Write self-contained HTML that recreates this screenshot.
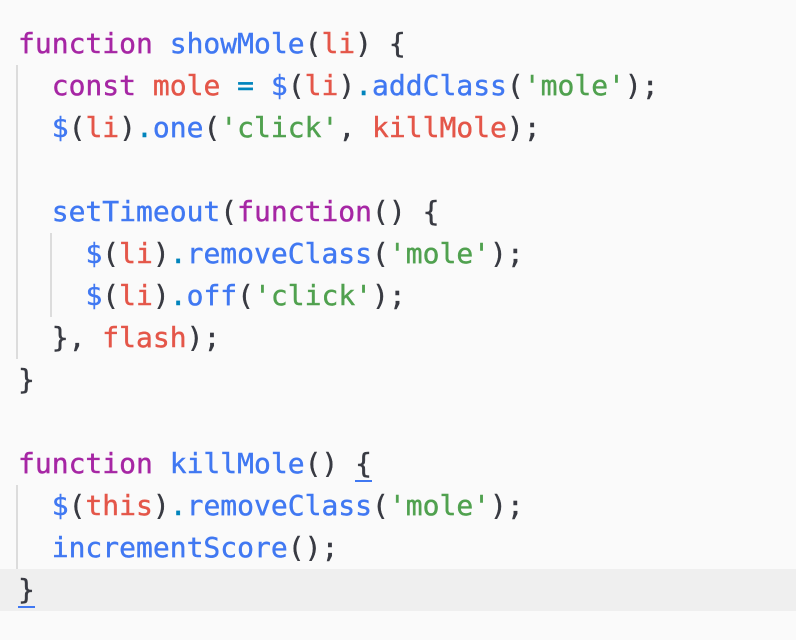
<!DOCTYPE html>
<html><head><style>
body{margin:0;background:#fafafa;width:796px;height:640px;overflow:hidden;position:relative}
.l{position:absolute;left:18px;height:42px;line-height:42px;font-family:"DejaVu Sans Mono","Liberation Mono",monospace;font-size:28px;color:#383a42;white-space:pre;-webkit-text-stroke:0.4px currentColor}
.k{color:#a626a4}.f{color:#4078f2}.v{color:#e45649}.s{color:#50a14f}.o{color:#0184bc}
.g{position:absolute;width:2px;background:#dcdcdc}
.u{border-bottom:2px solid #4078f2}
</style></head><body>
<div style="position:absolute;left:0;top:569px;width:796px;height:42px;background:#efefef"></div>
<div class="g" style="left:16px;top:65px;height:294px"></div>
<div class="g" style="left:50px;top:233px;height:84px"></div>
<div class="g" style="left:16px;top:485px;height:84px"></div>
<div class="l" style="top:23px"><span class="k">function</span> <span class="f">showMole</span>(<span class="v">li</span>) {</div>
<div class="l" style="top:65px">  <span class="k">const</span> <span class="v">mole</span> <span class="o">=</span> <span class="f">$</span>(<span class="v">li</span>)<span class="o">.</span><span class="f">addClass</span>(<span class="s">'mole'</span>);</div>
<div class="l" style="top:107px">  <span class="f">$</span>(<span class="v">li</span>)<span class="o">.</span><span class="f">one</span>(<span class="s">'click'</span>, <span class="v">killMole</span>);</div>
<div class="l" style="top:191px">  <span class="f">setTimeout</span>(<span class="k">function</span>() {</div>
<div class="l" style="top:233px">    <span class="f">$</span>(<span class="v">li</span>)<span class="o">.</span><span class="f">removeClass</span>(<span class="s">'mole'</span>);</div>
<div class="l" style="top:275px">    <span class="f">$</span>(<span class="v">li</span>)<span class="o">.</span><span class="f">off</span>(<span class="s">'click'</span>);</div>
<div class="l" style="top:317px">  }, <span class="v">flash</span>);</div>
<div class="l" style="top:359px">}</div>
<div class="l" style="top:443px"><span class="k">function</span> <span class="f">killMole</span>() <span class="u">{</span></div>
<div class="l" style="top:485px">  <span class="f">$</span>(<span class="v">this</span>)<span class="o">.</span><span class="f">removeClass</span>(<span class="s">'mole'</span>);</div>
<div class="l" style="top:527px">  <span class="f">incrementScore</span>();</div>
<div class="l" style="top:569px"><span class="u">}</span></div>
</body></html>
